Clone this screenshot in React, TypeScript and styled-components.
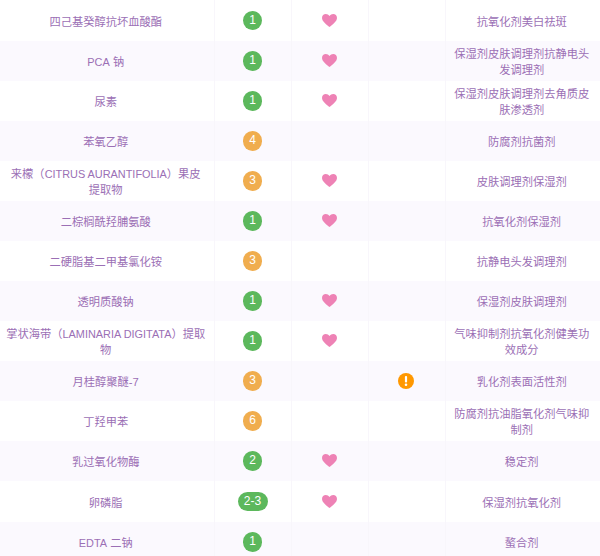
import styled, { createGlobalStyle } from "styled-components";

const GlobalStyle = createGlobalStyle`
  html, body {
    margin: 0;
    padding: 0;
    background: #fff;
    overflow: hidden;
  }
`;

interface Ingredient {
  name: string;
  score: string;
  acne?: boolean;
  warn?: boolean;
  use: string;
}

const rows: Ingredient[] = [
  { name: "四己基癸醇抗坏血酸酯", score: "1", acne: true, use: "抗氧化剂美白祛斑" },
  { name: "PCA 钠", score: "1", acne: true, use: "保湿剂皮肤调理剂抗静电头发调理剂" },
  { name: "尿素", score: "1", acne: true, use: "保湿剂皮肤调理剂去角质皮肤渗透剂" },
  { name: "苯氧乙醇", score: "4", use: "防腐剂抗菌剂" },
  { name: "来檬（CITRUS AURANTIFOLIA）果皮提取物", score: "3", acne: true, use: "皮肤调理剂保湿剂" },
  { name: "二棕榈酰羟脯氨酸", score: "1", acne: true, use: "抗氧化剂保湿剂" },
  { name: "二硬脂基二甲基氯化铵", score: "3", use: "抗静电头发调理剂" },
  { name: "透明质酸钠", score: "1", acne: true, use: "保湿剂皮肤调理剂" },
  { name: "掌状海带（LAMINARIA DIGITATA）提取物", score: "1", acne: true, use: "气味抑制剂抗氧化剂健美功效成分" },
  { name: "月桂醇聚醚-7", score: "3", warn: true, use: "乳化剂表面活性剂" },
  { name: "丁羟甲苯", score: "6", use: "防腐剂抗油脂氧化剂气味抑制剂" },
  { name: "乳过氧化物酶", score: "2", acne: true, use: "稳定剂" },
  { name: "卵磷脂", score: "2-3", acne: true, use: "保湿剂抗氧化剂" },
  { name: "EDTA 二钠", score: "1", use: "螯合剂" },
];

const Table = styled.table`
  width: 600px;
  table-layout: fixed;
  border-collapse: collapse;
  font-family: "Liberation Sans", "Noto Sans CJK SC", sans-serif;
  font-size: 11.25px;
  line-height: 16px;
  color: #9b6fb5;
`;

const Row = styled.tr`
  height: 40px;
  &:nth-child(even) {
    background: #fbf9fe;
  }
  &:nth-child(1),
  &:nth-child(13) {
    height: 41px;
  }
`;

const Cell = styled.td<{ $width: number }>`
  width: ${(p) => p.$width}px;
  box-sizing: border-box;
  padding: 2px 8px 0;
  text-align: center;
  vertical-align: middle;
  border-left: 1px solid #f8f6fb;
  &:first-child {
    border-left: 0;
  }
`;

const TextCell = styled(Cell)`
  padding: 2px 10px 0 8px;
  &:first-child {
    padding: 2px 8px 0 6px;
  }
`;

const Latin = styled.span`
  font-size: 10.9px;
`;

const Badge = styled.span<{ $color: string; $wide: boolean }>`
  display: block;
  box-sizing: border-box;
  width: ${(p) => (p.$wide ? 30 : 19.5)}px;
  height: 19.5px;
  margin: -2px auto 0;
  border-radius: 10px;
  background: ${(p) => p.$color};
  color: #fff;
  font-size: 12px;
  line-height: 19.5px;
`;

const IconWrap = styled.span`
  display: flex;
  justify-content: center;
  align-items: center;
  margin-top: -3px;
`;

const WarnWrap = styled(IconWrap)`
  margin-right: 2px;
`;

const scoreColor = (score: string) => {
  if (score === "2-3" || parseInt(score, 10) <= 2) return "#5cb85c";
  return "#f0ad4e";
};

// 라틴 문자만 살짝 작게
const renderName = (name: string) =>
  name
    .split(/([A-Z][A-Z -]*[A-Z])/)
    .map((part, i) => (i % 2 === 1 ? <Latin key={i}>{part}</Latin> : part));

function Heart() {
  return (
    <svg width="15" height="13" viewBox="0 0 15 13">
      <path
        d="M7.5 13 C5 10.6 0 7.6 0 3.9 C0 1.6 1.7 0 3.8 0 C5.3 0 6.7 0.8 7.5 2.1 C8.3 0.8 9.7 0 11.2 0 C13.3 0 15 1.6 15 3.9 C15 7.6 10 10.6 7.5 13 Z"
        fill="#ee82b5"
      />
    </svg>
  );
}

function Warn() {
  return (
    <svg width="16" height="16" viewBox="0 0 16 16">
      <circle cx="8" cy="8" r="8" fill="#ff9800" />
      <rect x="6.9" y="3" width="2.2" height="6.6" rx="1" fill="#fff" />
      <circle cx="8" cy="11.8" r="1.3" fill="#fff" />
    </svg>
  );
}

export default function App() {
  return (
    <>
      <GlobalStyle />
      <Table>
        <tbody>
          {rows.map((r) => (
            <Row key={r.name}>
              <TextCell $width={214}>{renderName(r.name)}</TextCell>
              <Cell $width={77}>
                <Badge $color={scoreColor(r.score)} $wide={r.score.length > 1}>{r.score}</Badge>
              </Cell>
              <Cell $width={77}>{r.acne && <IconWrap><Heart /></IconWrap>}</Cell>
              <Cell $width={77}>{r.warn && <WarnWrap><Warn /></WarnWrap>}</Cell>
              <TextCell $width={155}>{r.use}</TextCell>
            </Row>
          ))}
        </tbody>
      </Table>
    </>
  );
}
